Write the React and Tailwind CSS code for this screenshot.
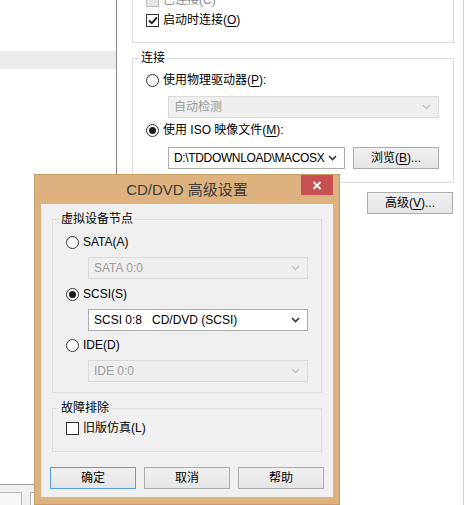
import React from 'react';

const font = "font-['Liberation_Sans','Noto_Sans_CJK_SC',sans-serif]";

function Chevron({ disabled }) {
  return (
    <svg width="9" height="6" viewBox="0 0 9 6" className="shrink-0">
      <path d="M1 1 L4.5 4.5 L8 1" fill="none" stroke={disabled ? '#c4c4c4' : '#3a3a3a'} strokeWidth="1.6" />
    </svg>
  );
}

function Select({ value, disabled, className = '', tight }) {
  return (
    <div
      className={`h-[22px] flex items-center justify-between pl-[5px] pr-[7px] border text-[12px] leading-[14px] ${
        disabled ? 'bg-[#efefef] border-[#d9d9d9] text-[#9a9a9a]' : 'bg-white border-[#acacac] text-black'
      } ${className}`}
    >
      <span className={`whitespace-pre ${tight ? 'tracking-[-0.35px]' : ''}`}>{value}</span>
      <Chevron disabled={disabled} />
    </div>
  );
}

function Radio({ checked, children }) {
  return (
    <div className="h-[20px] flex items-center gap-[4px] text-[12px] leading-[14px]">
      <div className="w-[13px] h-[13px] rounded-full border border-[#333] bg-white flex items-center justify-center shrink-0">
        {checked && <div className="w-[7px] h-[7px] rounded-full bg-[#1c1c1c]" />}
      </div>
      <span>{children}</span>
    </div>
  );
}

function Checkbox({ checked, disabled, children }) {
  return (
    <div className={`h-[20px] flex items-center gap-[4px] text-[12px] leading-[14px] ${disabled ? 'text-[#8d8d8d]' : ''}`}>
      <div
        className={`w-[13px] h-[13px] border flex items-center justify-center shrink-0 ${
          disabled ? 'border-[#bcbcbc] bg-[#e6e6e6]' : 'border-[#333] bg-white'
        }`}
      >
        {checked && (
          <svg width="10" height="9" viewBox="0 0 10 9">
            <path d="M1 4.5 L3.8 7.2 L9 1.3" fill="none" stroke="#1c1c1c" strokeWidth="1.9" />
          </svg>
        )}
      </div>
      <span>{children}</span>
    </div>
  );
}

function Button({ children, primary, className = '' }) {
  return (
    <div
      className={`h-[22px] w-[86px] flex items-center justify-center border text-[12px] leading-[14px] text-black bg-gradient-to-b from-[#f0f0f0] to-[#e5e5e5] ${
        primary ? 'border-[#569de5]' : 'border-[#acacac]'
      } ${className}`}
    >
      {children}
    </div>
  );
}

function Group({ title, children, className = '', pb = 'pb-[13px]' }) {
  return (
    <fieldset className={`border border-[#dcdcdc] p-0 m-0 min-w-0 ${className}`}>
      <legend className="ml-[6px] px-[2px] text-[12px] leading-[14px] text-black">{title}</legend>
      <div className={`pl-[13px] ${pb}`}>{children}</div>
    </fieldset>
  );
}

const U = ({ children }) => <span className="underline underline-offset-[2px]">{children}</span>;

export default function App() {
  return (
    <div className={`relative w-[468px] h-[505px] overflow-hidden bg-white text-black ${font}`}>
      <div className="flex h-full">
        {/* left tree pane */}
        <div className="w-[116px] h-full flex flex-col">
          <div className="h-[51px]" />
          <div className="h-[18px] bg-[#ececec]" />
          <div className="flex-1" />
          <div className="h-px bg-[#a0a0a0]" />
          <div className="h-[20px] bg-[#f0f0f0] flex items-start gap-[8px] pt-[7px]">
            <div className="w-[23px] h-[13px] bg-[#f7f7f7] border border-[#b8b8b8] border-b-0 -ml-px" />
            <div className="w-[40px] h-[13px] bg-[#f7f7f7] border border-[#b8b8b8] border-b-0" />
          </div>
        </div>
        <div className="w-px h-full bg-[#8c8c8c]" />

        {/* right settings pane */}
        <div className="flex-1 flex">
          <div className="w-[337px] pl-[15px]">
            <div className="w-[322px] -mt-[30px] border border-[#dcdcdc] pt-[19px] pb-[12px] pl-[13px]">
              <Checkbox disabled>已连接(C)</Checkbox>
              <Checkbox checked>
                启动时连接(<U>O</U>)
              </Checkbox>
            </div>

            <Group title="连接" className="w-[322px] mt-[8px]">
              <div className="mt-[5px]">
                <Radio>
                  使用物理驱动器(<U>P</U>):
                </Radio>
              </div>
              <Select disabled value="自动检测" className="mt-[6px] ml-[22px] w-[271px]" />
              <div className="mt-[2px]">
                <Radio checked>
                  使用 ISO 映像文件(<U>M</U>):
                </Radio>
              </div>
              <div className="mt-[7px] ml-[22px] flex gap-[8px]">
                <Select tight value="D:\TDDOWNLOAD\MACOSX" className="w-[177px]" />
                <Button className="w-[85px]">
                  浏览(<U>B</U>)...
                </Button>
              </div>
            </Group>

            <div className="w-[322px] flex justify-end pr-px mt-[9px]">
              <Button>
                高级(<U>V</U>)...
              </Button>
            </div>
          </div>
          <div className="w-[9px]" />
          <div className="w-px h-full bg-[#d4d4d4]" />
          <div className="flex-1 bg-white" />
        </div>
      </div>

      {/* CD/DVD advanced settings dialog */}
      <div className="absolute left-[34px] top-[174px] w-[306px] h-[331px] border border-[#c99d66] bg-[#deb27f] px-[6px] pb-[6px]">
        <div className="h-[29px] flex items-center justify-center text-[15px] leading-[18px] text-[#3a3a3a]">
          CD/DVD 高级设置
        </div>
        <div className="absolute right-[6px] top-0 w-[32px] h-[20px] bg-[#c75050] flex items-center justify-center">
          <svg width="10" height="9" viewBox="0 0 10 9">
            <path d="M1.5 1 L8.5 8 M8.5 1 L1.5 8" stroke="#fff" strokeWidth="1.8" />
          </svg>
        </div>

        <div className="h-[293px] bg-[#f0f0f0] pt-[8px]">
          <Group title="虚拟设备节点" className="mx-[11px]" pb="pb-[10px]">
            <div className="mt-[6px]">
              <Radio>SATA(A)</Radio>
            </div>
            <Select disabled value="SATA 0:0" className="mt-[5px] ml-[22px] w-[220px]" />
            <div className="mt-[5px]">
              <Radio checked>SCSI(S)</Radio>
            </div>
            <Select value="SCSI 0:8   CD/DVD (SCSI)" className="mt-[5px] ml-[22px] w-[220px]" />
            <div className="mt-[4px]">
              <Radio>IDE(D)</Radio>
            </div>
            <Select disabled value="IDE 0:0" className="mt-[5px] ml-[22px] w-[220px]" />
          </Group>

          <Group title="故障排除" className="mx-[11px] mt-[8px]" pb="pb-[13px]">
            <div className="mt-[3px]">
              <Checkbox>旧版仿真(L)</Checkbox>
            </div>
          </Group>

          <div className="mt-[15px] px-[9px] flex gap-[8px]">
            <Button primary>确定</Button>
            <Button>取消</Button>
            <Button>帮助</Button>
          </div>
        </div>
      </div>
    </div>
  );
}
